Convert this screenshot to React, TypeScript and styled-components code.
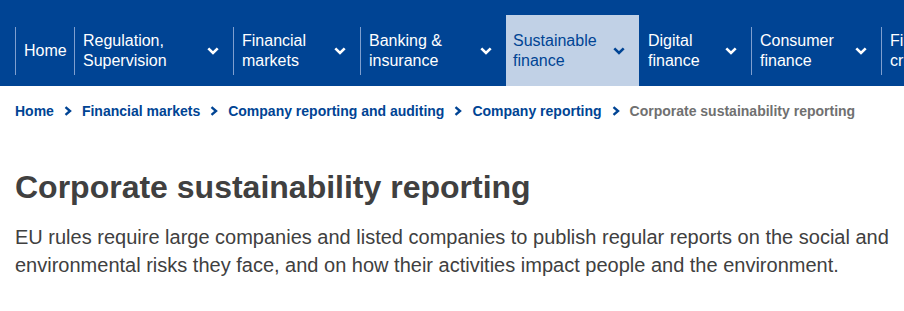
import React from 'react';
import styled, { createGlobalStyle } from 'styled-components';

const GlobalStyle = createGlobalStyle`
  body {
    margin: 0;
    background: #ffffff;
    font-family: 'Liberation Sans', Arial, sans-serif;
  }
`;

const Page = styled.div`
  width: 904px;
  overflow: hidden;
`;

const NavBar = styled.nav`
  background: #004494;
  height: 86px;
  box-sizing: border-box;
  padding: 15px 0 0 15px;
  display: flex;
  overflow: hidden;
`;

const NavItem = styled.div<{ $width: number; $active?: boolean }>`
  flex: 0 0 ${(p) => p.$width}px;
  min-width: 0;
  height: 71px;
  display: flex;
  align-items: center;
  background: ${(p) => (p.$active ? '#c1d1e6' : 'transparent')};
  color: ${(p) => (p.$active ? '#004494' : '#ffffff')};
`;

const ItemBody = styled.div<{ $separator: boolean; $active?: boolean; $menu: boolean }>`
  flex: 1;
  min-width: 0;
  height: 48px;
  display: flex;
  align-items: center;
  box-sizing: border-box;
  border-left: 1px solid ${(p) => (p.$separator ? '#7f9fcf' : 'transparent')};
  padding: 0 ${(p) => (p.$menu ? 14 : 4)}px 0 ${(p) => (p.$active ? 6 : 8)}px;
`;

const ItemLabel = styled.span`
  font-size: 16px;
  line-height: 20px;
  white-space: pre-line;
`;

const Chevron = styled.svg`
  margin-left: auto;
  flex: 0 0 auto;
`;

const Breadcrumb = styled.ol`
  list-style: none;
  margin: 0;
  padding: 15px 15px 0;
  display: flex;
  align-items: center;
`;

const Crumb = styled.li<{ $current?: boolean }>`
  display: flex;
  align-items: center;
  font-size: 14px;
  line-height: 20px;
  font-weight: 700;
  color: ${(p) => (p.$current ? '#707070' : '#004494')};
  white-space: nowrap;
`;

const CrumbArrow = styled.svg`
  margin: 0 10px;
`;

const Content = styled.main`
  padding: 47px 8px 0 15px;
`;

const Title = styled.h1`
  margin: 0;
  font-size: 32px;
  line-height: 38px;
  font-weight: 700;
  color: #404040;
`;

const Lead = styled.p`
  margin: 17px 0 0;
  font-size: 20px;
  line-height: 28px;
  color: #404040;
`;

const navItems = [
  { label: 'Home', width: 59, menu: false },
  { label: 'Regulation,\nSupervision', width: 159, menu: true },
  { label: 'Financial\nmarkets', width: 127, menu: true },
  { label: 'Banking &\ninsurance', width: 146, menu: true },
  { label: 'Sustainable\nfinance', width: 133, menu: true, active: true },
  { label: 'Digital\nfinance', width: 112, menu: true },
  { label: 'Consumer\nfinance', width: 130, menu: true },
  { label: 'Financial\ncrime', width: 140, menu: true },
];

const crumbs = [
  'Home',
  'Financial markets',
  'Company reporting and auditing',
  'Company reporting',
  'Corporate sustainability reporting',
];

export default function App() {
  return (
    <Page>
      <GlobalStyle />
      <NavBar>
        {navItems.map((item, index) => {
          const prev = navItems[index - 1];
          const separator = !item.active && !(prev && prev.active);
          return (
            <NavItem key={index} $width={item.width} $active={item.active}>
              <ItemBody $separator={separator} $active={item.active} $menu={item.menu}>
                <ItemLabel>{item.label}</ItemLabel>
                {item.menu && (
                  <Chevron width="12" height="8" viewBox="0 0 12 8">
                    <path d="M1.3 1.3 6 6 10.7 1.3" fill="none" stroke="currentColor" strokeWidth="2.6" />
                  </Chevron>
                )}
              </ItemBody>
            </NavItem>
          );
        })}
      </NavBar>
      <Breadcrumb>
        {crumbs.map((crumb, index) => (
          <Crumb key={index} $current={index === crumbs.length - 1}>
            {crumb}
            {index < crumbs.length - 1 && (
              <CrumbArrow width="8" height="10" viewBox="0 0 8 10">
                <path d="M1.5 1.2 6 5 1.5 8.8" fill="none" stroke="#004494" strokeWidth="2.4" />
              </CrumbArrow>
            )}
          </Crumb>
        ))}
      </Breadcrumb>
      <Content>
        <Title>Corporate sustainability reporting</Title>
        <Lead>
          EU rules require large companies and listed companies to publish regular reports on the social and
          environmental risks they face, and on how their activities impact people and the environment.
        </Lead>
      </Content>
    </Page>
  );
}
